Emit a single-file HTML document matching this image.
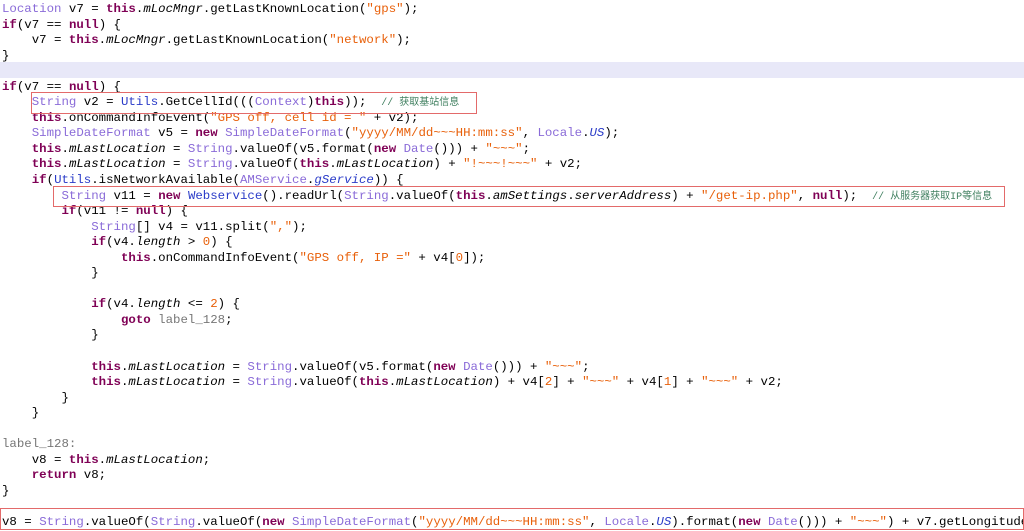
<!DOCTYPE html>
<html><head><meta charset="utf-8"><style>
body{margin:0;width:1024px;height:526px;overflow:hidden;background:#fff;position:relative}
.c{position:absolute;left:2px;top:2px;font-family:"Liberation Mono","Noto Sans CJK SC",monospace;font-size:12.4px;color:#000}
.l{height:15.55px;line-height:15.55px;white-space:pre}
.k{color:#7f0055;font-weight:bold}
.s{color:#e8600a}
.t{color:#8a6bd8}
.b{color:#2a3bc8}
.i{font-style:italic}
.g{color:#3f7f5f;font-size:10px}
.lb{color:#777}
.hl{position:absolute;left:0;top:62px;width:1024px;height:15.5px;background:#e8e8f8}
.box{position:absolute;border:1px solid #e36a6a}
</style></head><body>
<div class="hl"></div>
<div class="c"><div class="l"><span class="t">Location</span> v7 = <span class="k">this</span>.<span class="i">mLocMngr</span>.getLastKnownLocation(<span class="s">"gps"</span>);</div><div class="l"><span class="k">if</span>(v7 == <span class="k">null</span>) {</div><div class="l">    v7 = <span class="k">this</span>.<span class="i">mLocMngr</span>.getLastKnownLocation(<span class="s">"network"</span>);</div><div class="l">}</div><div class="l"> </div><div class="l"><span class="k">if</span>(v7 == <span class="k">null</span>) {</div><div class="l">    <span class="t">String</span> v2 = <span class="b">Utils</span>.GetCellId(((<span class="t">Context</span>)<span class="k">this</span>));  <span class="g">// 获取基站信息</span></div><div class="l">    <span class="k">this</span>.onCommandInfoEvent(<span class="s">"GPS off, cell id = "</span> + v2);</div><div class="l">    <span class="t">SimpleDateFormat</span> v5 = <span class="k">new</span> <span class="t">SimpleDateFormat</span>(<span class="s">"yyyy/MM/dd~~~HH:mm:ss"</span>, <span class="t">Locale</span>.<span class="i b">US</span>);</div><div class="l">    <span class="k">this</span>.<span class="i">mLastLocation</span> = <span class="t">String</span>.valueOf(v5.format(<span class="k">new</span> <span class="t">Date</span>())) + <span class="s">"~~~"</span>;</div><div class="l">    <span class="k">this</span>.<span class="i">mLastLocation</span> = <span class="t">String</span>.valueOf(<span class="k">this</span>.<span class="i">mLastLocation</span>) + <span class="s">"!~~~!~~~"</span> + v2;</div><div class="l">    <span class="k">if</span>(<span class="b">Utils</span>.isNetworkAvailable(<span class="t">AMService</span>.<span class="i b">gService</span>)) {</div><div class="l">        <span class="t">String</span> v11 = <span class="k">new</span> <span class="b">Webservice</span>().readUrl(<span class="t">String</span>.valueOf(<span class="k">this</span>.<span class="i">amSettings</span>.<span class="i">serverAddress</span>) + <span class="s">"/get-ip.php"</span>, <span class="k">null</span>);  <span class="g">// 从服务器获取IP等信息</span></div><div class="l">        <span class="k">if</span>(v11 != <span class="k">null</span>) {</div><div class="l">            <span class="t">String</span>[] v4 = v11.split(<span class="s">","</span>);</div><div class="l">            <span class="k">if</span>(v4.<span class="i">length</span> &gt; <span class="s">0</span>) {</div><div class="l">                <span class="k">this</span>.onCommandInfoEvent(<span class="s">"GPS off, IP ="</span> + v4[<span class="s">0</span>]);</div><div class="l">            }</div><div class="l"> </div><div class="l">            <span class="k">if</span>(v4.<span class="i">length</span> &lt;= <span class="s">2</span>) {</div><div class="l">                <span class="k">goto</span> <span class="lb">label_128</span>;</div><div class="l">            }</div><div class="l"> </div><div class="l">            <span class="k">this</span>.<span class="i">mLastLocation</span> = <span class="t">String</span>.valueOf(v5.format(<span class="k">new</span> <span class="t">Date</span>())) + <span class="s">"~~~"</span>;</div><div class="l">            <span class="k">this</span>.<span class="i">mLastLocation</span> = <span class="t">String</span>.valueOf(<span class="k">this</span>.<span class="i">mLastLocation</span>) + v4[<span class="s">2</span>] + <span class="s">"~~~"</span> + v4[<span class="s">1</span>] + <span class="s">"~~~"</span> + v2;</div><div class="l">        }</div><div class="l">    }</div><div class="l"> </div><div class="l"><span class="lb">label_128:</span></div><div class="l">    v8 = <span class="k">this</span>.<span class="i">mLastLocation</span>;</div><div class="l">    <span class="k">return</span> v8;</div><div class="l">}</div><div class="l"> </div><div class="l">v8 = <span class="t">String</span>.valueOf(<span class="t">String</span>.valueOf(<span class="k">new</span> <span class="t">SimpleDateFormat</span>(<span class="s">"yyyy/MM/dd~~~HH:mm:ss"</span>, <span class="t">Locale</span>.<span class="i b">US</span>).format(<span class="k">new</span> <span class="t">Date</span>())) + <span class="s">"~~~"</span>) + v7.getLongitude());</div></div>
<div class="box" style="left:31px;top:92px;width:444px;height:20px"></div>
<div class="box" style="left:53px;top:186px;width:950px;height:19px"></div>
<div class="box" style="left:0;top:508px;width:1022px;height:20px"></div>
</body></html>
